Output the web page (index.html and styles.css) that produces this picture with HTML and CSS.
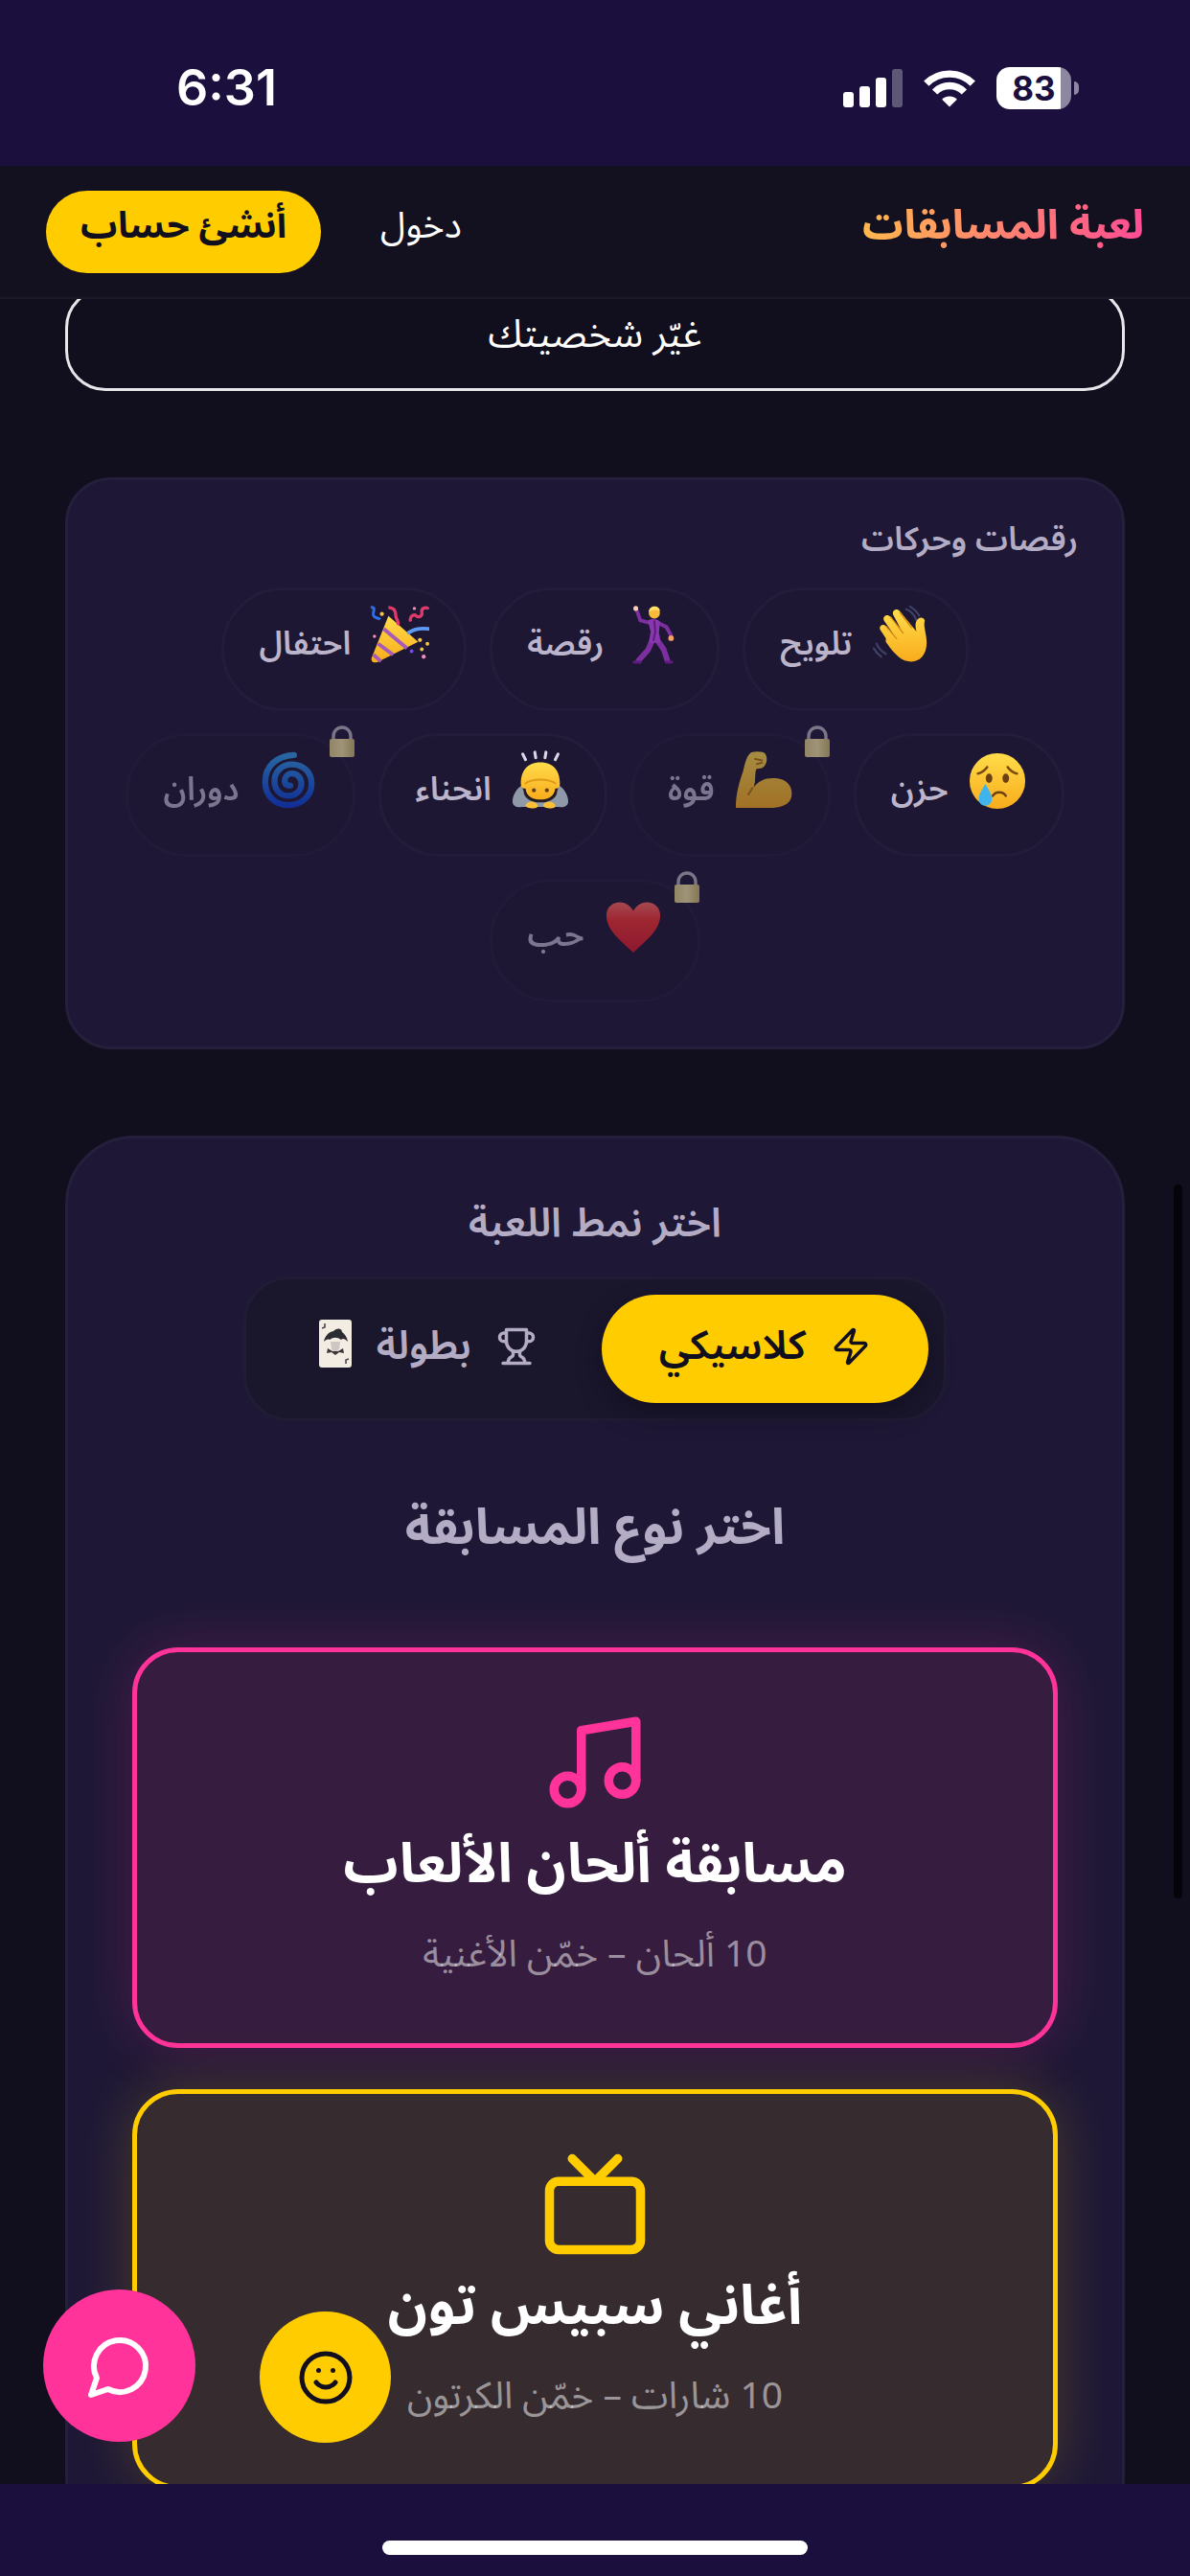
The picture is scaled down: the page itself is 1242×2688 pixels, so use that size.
FILE: index.html
```html
<!DOCTYPE html>
<html lang="ar" dir="rtl">
<head>
<meta charset="utf-8">
<meta name="viewport" content="width=device-width, initial-scale=1">
<title>لعبة المسابقات</title>
<link rel="stylesheet" href="styles.css">
</head>
<body>
<svg class="defs" width="0" height="0" aria-hidden="true">
  <defs>
    <linearGradient id="skin" x1="0" y1="0" x2="0" y2="1"><stop offset="0" stop-color="#ffdc4a"/><stop offset="1" stop-color="#f9ac1c"/></linearGradient>
    <linearGradient id="heart" x1="0" y1="0" x2="0" y2="1"><stop offset="0" stop-color="#ff6a62"/><stop offset=".35" stop-color="#f5312f"/><stop offset="1" stop-color="#d81a2c"/></linearGradient>
    <linearGradient id="swirl" x1="0" y1="0" x2="0" y2="1"><stop offset="0" stop-color="#2f9be8"/><stop offset="1" stop-color="#0a3fd6"/></linearGradient>
    <linearGradient id="brass" x1="0" y1="0" x2="1" y2="0"><stop offset="0" stop-color="#e0cf86"/><stop offset=".5" stop-color="#f4e6a4"/><stop offset="1" stop-color="#c9b76c"/></linearGradient>
    <symbol id="lock" viewBox="0 0 28 34">
      <path d="M5 16V11a9 9 0 0 1 18 0v5" fill="none" stroke="#b9b5bd" stroke-width="3.4"/>
      <rect x="1" y="14" width="26" height="19" rx="2" fill="url(#brass)"/>
    </symbol>
  </defs>
</svg>
<div class="app">
  <div class="status" dir="ltr">
    <span class="status-time">6:31</span>
    <div class="status-icons">
      <svg width="62" height="40" viewBox="0 0 62 40" fill="#fff" aria-hidden="true">
        <rect x="0" y="24" width="11" height="16" rx="3"/><rect x="17" y="18" width="11" height="22" rx="3"/><rect x="34" y="9" width="11" height="31" rx="3"/><rect x="51" y="0" width="11" height="40" rx="3" opacity=".3"/>
      </svg>
      <svg width="54" height="40" viewBox="0 0 54 40" fill="none" stroke="#fff" stroke-width="7.4" aria-hidden="true">
        <path d="M2.8 15.2a34 34 0 0 1 48.400 0"/><path d="M11.600 24a21.600 21.600 0 0 1 30.800 0"/><path d="M27 39.500l-7.800-7.800a11 11 0 0 1 15.600 0z" fill="#fff" stroke="none"/>
      </svg>
      <div class="battery"><span>83</span></div>
    </div>
  </div>

  <header class="topbar">
    <a class="brand" href="#">لعبة المسابقات</a>
    <nav class="auth">
      <a class="login" href="#">دخول</a>
      <button class="signup" type="button">أنشئ حساب</button>
    </nav>
  </header>

  <main class="content">
    <button class="change" type="button">غيّر شخصيتك</button>

    <section class="panel moves">
      <h2 class="panel-label">رقصات وحركات</h2>
      <div class="chips">
        <button class="chip" type="button">
          <svg class="emoji" viewBox="0 0 64 64" aria-hidden="true">
            <path d="M37 5c5 2 9 6 11 12M41 2c5 3 8 6 10 10M5 42c2 5 5 8 10 11M2 47c2 4 4 6 8 9" fill="none" stroke="#3f4266" stroke-width="2.200" stroke-linecap="round"/>
            <path d="M15 36 9 27c-2-4 3-7 6-4l9 10L13 17c-2-4 3-8 7-4l11 13-8-15c-2-5 4-8 7-4l18 22c-1-5-2-9 1-13 2-3 7-3 8 1-2 6 2 14 2 24 0 14-9 22-20 20C29 60 20 47 15 40z" fill="url(#skin)"/>
            <path d="M15 23l12 14M20 13l14 18M30 8l13 17" fill="none" stroke="#d98b13" stroke-width="1.400"/>
          </svg>
          <span>تلويح</span>
        </button>
        <button class="chip" type="button">
          <svg class="emoji" viewBox="0 0 64 64" aria-hidden="true">
            <g fill="none" stroke="#7d2fa0" stroke-linecap="round" stroke-linejoin="round">
              <path d="M31 20 19 17 15 6" stroke-width="4"/>
              <path d="M37 19 47 24 52 33" stroke-width="4"/>
              <path d="M32 38 27 49 17 60" stroke-width="6"/>
              <path d="M37 38 44 48 48 60" stroke-width="6"/>
            </g>
            <path d="M27 17c4-2 9-2 13 1l-1 12 2 11H28l2-12z" fill="#8a36ae"/>
            <path d="M34 17l1 12-2 10" fill="none" stroke="#5b1d7c" stroke-width="2"/>
            <circle cx="34" cy="9" r="6" fill="#fbb93c"/><path d="M28 8c0-8 12-8 12-1-4-2-8-2-12 1z" fill="#ffe06b"/>
            <circle cx="14" cy="4" r="2.600" fill="#fbd0b0"/><circle cx="52" cy="36" r="3" fill="#f7a066"/>
            <path d="M12 62h7M47 62h6" stroke="#5b1d7c" stroke-width="3" stroke-linecap="round"/>
          </svg>
          <span>رقصة</span>
        </button>
        <button class="chip" type="button">
          <svg class="emoji" viewBox="0 0 64 64" aria-hidden="true">
            <path d="M20 12 52 40 8 62c-5 1-7-1-6-5z" fill="url(#skin)"/>
            <path d="M15 26 40 47M9 42l16 12M4 54l8 7" stroke="#a75bb8" stroke-width="4"/>
            <path d="M1 3c7-1 1 6 3 9s6 2 7 4" fill="none" stroke="#2f6fe8" stroke-width="3"/>
            <path d="M20 3c7 0 8 5 8 9s4 6 2 10M44 18c-2-6 4-8 6-6s7 1 6-4 6-6 7-3" fill="none" stroke="#e03a6c" stroke-width="3.400"/>
            <path d="M42 30c6-4 12-5 21-4" fill="none" stroke="#5b9bf5" stroke-width="4" stroke-linecap="round"/>
            <g fill="#f5c842"><circle cx="13" cy="10" r="2.200"/><circle cx="54" cy="38" r="2.200"/><circle cx="62" cy="42" r="2"/><circle cx="56" cy="48" r="2"/></g>
            <g fill="#f28cb8"><circle cx="58" cy="56" r="2.200"/><circle cx="48" cy="4" r="1.800"/><circle cx="5" cy="34" r="1.800"/></g>
            <circle cx="45" cy="50" r="2" fill="#7a4be0"/>
          </svg>
          <span>احتفال</span>
        </button>
        <button class="chip" type="button">
          <svg class="emoji" viewBox="0 0 64 64" aria-hidden="true">
            <circle cx="32" cy="33" r="30" fill="url(#skin)"/>
            <path d="M11 25c4-1 7-3 10-7M43 18c3 4 6 6 10 7" fill="none" stroke="#7a4a12" stroke-width="2.600" stroke-linecap="round"/>
            <ellipse cx="23" cy="30" rx="3.600" ry="5" fill="#6b4012"/><ellipse cx="41" cy="30" rx="3.600" ry="5" fill="#6b4012"/>
            <path d="M27 49c3-5 11-5 14 0" fill="none" stroke="#6b4012" stroke-width="2.600" stroke-linecap="round"/>
            <path d="M19 36c4 7 7 11 7 16 0 10-14 10-14 0 0-5 3-9 7-16z" fill="#41b4ee"/>
          </svg>
          <span>حزن</span>
        </button>
        <button class="chip locked" type="button">
          <svg class="emoji" viewBox="0 0 64 64" aria-hidden="true">
            <path d="M2 62c0-16 4-28 8-40 2-9 4-17 9-20 5-1 13-1 15 2 3 5 1 13-4 15l-6 1c-2 7 0 13-3 20 6-8 14-11 24-10 13 1 19 10 17 20-2 9-12 12-25 12z" fill="url(#skin)"/>
            <path d="M20 40c-2 4-3 6-5 8M22 9l9 2M24 15l7-2" fill="none" stroke="#b8740f" stroke-width="2"/>
          </svg>
          <span>قوة</span>
          <svg class="badge"><use href="#lock"/></svg>
        </button>
        <button class="chip" type="button">
          <svg class="emoji" viewBox="0 0 64 64" aria-hidden="true">
            <path d="M13 4l3 6M26 2l1 6M38 2l-1 6M51 4l-3 6" stroke="#d9d6e8" stroke-width="3.200" stroke-linecap="round"/>
            <path d="M12 38c-6 3-10 11-10 17 0 5 5 7 10 6h40c5 1 10-1 10-6 0-6-4-14-10-17z" fill="#8f99a8"/>
            <path d="M14 44c0 16 36 16 36 0l2-6H12z" fill="#241c22"/>
            <path d="M11 36c0-13 6-23 21-23s21 10 21 23c0 4-2 5-5 5-1 9-8 12-16 12s-15-3-16-12c-3 0-5-1-5-5z" fill="url(#skin)"/>
            <path d="M15 36c9-6 25-6 34 0" fill="none" stroke="#e09a18" stroke-width="2.200"/>
            <circle cx="25" cy="43" r="2.200" fill="#6b4012"/><circle cx="39" cy="43" r="2.200" fill="#6b4012"/>
            <path d="M16 59c2-5 11-5 13 0s-13 4-13 0zM35 59c2-5 11-5 13 0s-13 4-13 0z" fill="#fcbf35"/>
          </svg>
          <span>انحناء</span>
        </button>
        <button class="chip locked" type="button">
          <svg class="emoji" viewBox="0 0 64 64" fill="none" stroke="url(#swirl)" stroke-width="6.500" stroke-linecap="round" aria-hidden="true">
            <path d="M38 5C19 6 7 17 7 34c0 15 11 25 25 25s25-10 25-23c0-12-9-21-21-21-11 0-19 8-19 18s7 16 15 16 14-6 14-13-5-11-10-11-8 4-8 8 3 5 6 5"/>
          </svg>
          <span>دوران</span>
          <svg class="badge"><use href="#lock"/></svg>
        </button>
        <button class="chip locked" type="button">
          <svg class="emoji" viewBox="0 0 64 64" aria-hidden="true">
            <path d="M32 61C22 51 3 38 3 21 3 5 24 1 32 16 40 1 61 5 61 21c0 17-19 30-29 40z" fill="url(#heart)"/>
          </svg>
          <span>حب</span>
          <svg class="badge"><use href="#lock"/></svg>
        </button>
      </div>
    </section>

    <section class="panel game">
      <h2 class="mode-label">اختر نمط اللعبة</h2>
      <div class="modes">
        <button class="mode active" type="button">
          <svg class="icon" viewBox="0 0 24 24" aria-hidden="true"><path d="M4 14a1 1 0 0 1-.78-1.630l9.900-10.200a.5.5 0 0 1 .86.460l-1.920 6.020A1 1 0 0 0 13 10h7a1 1 0 0 1 .78 1.630l-9.900 10.200a.5.5 0 0 1-.86-.46l1.920-6.020A1 1 0 0 0 11 14z"/></svg>
          <span>كلاسيكي</span>
        </button>
        <button class="mode" type="button">
          <svg class="icon" viewBox="0 0 24 24" aria-hidden="true"><path d="M6 9H4.500a2.500 2.500 0 0 1 0-5H6M18 9h1.500a2.500 2.500 0 0 0 0-5H18M4 22h16M10 14.660V17c0 .55-.47.98-.97 1.210C7.850 18.750 7 20.240 7 22M14 14.660V17c0 .55.47.98.97 1.210C16.150 18.750 17 20.240 17 22M18 2H6v7a6 6 0 0 0 12 0V2Z"/></svg>
          <span>بطولة</span>
          <svg class="joker" viewBox="0 0 34 50" aria-hidden="true">
            <rect x="0" y="0" width="34" height="50" rx="3" fill="#f3ece2"/>
            <path d="M5 23c1-6 5-10 10-11 4-4 9-3 9 1 3 2 5 5 6 10-3-3-5-4-7-2-4-3-8-3-12 0-2-1-4 0-6 2z" fill="#2e2c33"/>
            <path d="M12 23h10l-1 8-4 3-4-3z" fill="#cfc6c4"/>
            <path d="M9 30l5 3h6l5-3 1 5-5-1-4 3-4-3-5 1z" fill="#3b3436"/>
            <path d="M6 4v4l-3 1M28 46v-4l3-1" fill="none" stroke="#4a464e" stroke-width="1.600"/>
          </svg>
        </button>
      </div>

      <h1 class="pick">اختر نوع المسابقة</h1>

      <div class="quizzes">
        <button class="quiz pink" type="button">
          <svg class="quiz-icon" viewBox="0 0 24 24" aria-hidden="true"><path d="M9 18V5l12-2v13"/><circle cx="6" cy="18" r="3"/><circle cx="18" cy="16" r="3"/></svg>
          <span class="quiz-title">مسابقة ألحان الألعاب</span>
          <span class="quiz-sub">10 ألحان – خمّن الأغنية</span>
        </button>
        <button class="quiz yellow" type="button">
          <svg class="quiz-icon" viewBox="0 0 24 24" aria-hidden="true"><rect x="2" y="7" width="20" height="15" rx="2"/><path d="m17 2-5 5-5-5"/></svg>
          <span class="quiz-title">أغاني سبيس تون</span>
          <span class="quiz-sub">10 شارات – خمّن الكرتون</span>
        </button>
      </div>
    </section>

    <div class="thumb"></div>
    <button class="fab emote" type="button" aria-label="تعبيرات">
      <svg viewBox="0 0 24 24" aria-hidden="true"><circle cx="12" cy="12" r="10"/><path d="M8 14s1.500 2 4 2 4-2 4-2M9 9h.01M15 9h.01"/></svg>
    </button>
    <button class="fab chat" type="button" aria-label="محادثة">
      <svg viewBox="0 0 24 24" aria-hidden="true"><path d="M7.900 20A9 9 0 1 0 4 16.100L2 22Z"/></svg>
    </button>
  </main>

  <div class="home"><div class="home-bar"></div></div>
</div>
</body>
</html>
```
FILE: styles.css
```css
* { box-sizing: border-box; }

body {
  margin: 0;
  background: #110e1e;
  color: #fff;
  font-family: "Noto Sans Arabic", "Noto Sans", "DejaVu Sans", sans-serif;
}

button {
  font: inherit;
  color: inherit;
  background: none;
  border: 0;
  padding: 0;
  cursor: pointer;
}

a { color: inherit; text-decoration: none; }
h1, h2 { margin: 0; }

.defs { position: absolute; }

.app {
  display: flex;
  flex-direction: column;
  height: 100vh;
}

/* System bars */
.status {
  display: flex;
  justify-content: space-between;
  align-items: center;
  height: 173px;
  padding: 10px 124px 0 184px;
  background: #1b0f3d;
}

.status-time {
  font: 600 52px/1 Inter, sans-serif;
}

.status-icons {
  display: flex;
  align-items: center;
  gap: 22px;
}

.battery {
  position: relative;
  width: 78px;
  height: 44px;
  border-radius: 14px;
  background: linear-gradient(to right, #fff 86%, #8d87a0 86%);
  color: #1b0f3d;
  font: 700 35px/44px Inter, sans-serif;
  text-align: center;
}

.battery::after {
  content: "";
  position: absolute;
  left: 81px;
  top: 15px;
  width: 5px;
  height: 14px;
  border-radius: 0 5px 5px 0;
  background: #8d87a0;
}

.home {
  display: flex;
  justify-content: center;
  align-items: center;
  height: 96px;
  padding-top: 36px;
  background: #1b0f3d;
}

.home-bar {
  width: 444px;
  height: 15px;
  border-radius: 8px;
  background: #fff;
}

/* Header */
.topbar {
  display: flex;
  justify-content: space-between;
  align-items: center;
  height: 139px;
  padding: 0 48px;
  background: #13111f;
  border-bottom: 2px solid #1c1928;
}

.brand {
  padding-bottom: 12px;
  font-size: 42px;
  font-weight: 800;
  background: linear-gradient(to left, #ff4d94, #ffb84d);
  background-clip: text;
  color: transparent;
}

.auth {
  display: flex;
  align-items: center;
  gap: 62px;
}

.login {
  padding-bottom: 12px;
  font-size: 38px;
}

.signup {
  height: 86px;
  padding: 0 36px 12px;
  border-radius: 43px;
  background: #ffcc00;
  color: #110e1e;
  font-size: 38px;
  font-weight: 700;
  line-height: 60px;
}

/* Page */
.content {
  position: relative;
  display: flex;
  flex: 1;
  flex-direction: column;
  gap: 90px;
  min-height: 0;
  padding: 0 68px;
  overflow: hidden;
}

.change {
  flex: none;
  height: 108px;
  margin-top: -12px;
  padding-bottom: 8px;
  border: 3px solid #e7e6ea;
  border-radius: 42px;
  font-size: 40px;
  line-height: 56px;
}

.panel {
  flex: none;
  background: #1e1836;
  border: 3px solid #251f3c;
}

.moves {
  padding: 32px 46px 46px;
  border-radius: 48px;
}

.panel-label {
  color: #b3acc4;
  font-size: 34px;
  font-weight: 600;
  line-height: 60px;
}

.chips {
  display: flex;
  flex-wrap: wrap;
  justify-content: center;
  gap: 23px 24px;
  margin-top: 20px;
  padding: 0 12px;
}

.chip {
  position: relative;
  display: flex;
  align-items: center;
  gap: 20px;
  height: 129px;
  padding: 0 36px 12px;
  border: 3px solid #231d3c;
  border-radius: 65px;
  background: #1d1733;
  color: #bbb4ca;
  font-size: 34px;
  font-weight: 600;
}

.locked { opacity: .6; }

.emoji {
  width: 62px;
  height: 62px;
  margin-bottom: 20px;
}

.badge {
  position: absolute;
  top: -11px;
  right: -3px;
  width: 28px;
  height: 34px;
}

.game {
  display: flex;
  flex-direction: column;
  align-items: center;
  padding: 56px 67px;
  border-radius: 72px;
}

.mode-label {
  color: #b3acc4;
  font-size: 42px;
  font-weight: 600;
  line-height: 66px;
}

.modes {
  display: flex;
  gap: 8px;
  margin-top: 22px;
  padding: 16px;
  border: 3px solid #211c35;
  border-radius: 48px;
  background: #1a162c;
}

.mode {
  display: flex;
  align-items: center;
  gap: 26px;
  height: 113px;
  padding: 0 60px 6px;
  border-radius: 57px;
  color: #b3acc4;
  font-size: 42px;
  font-weight: 600;
}

.mode.active {
  background: #ffcc00;
  color: #110e1e;
  box-shadow: 0 12px 24px #0e0c1c80;
}

.icon {
  width: 42px;
  height: 42px;
  fill: none;
  stroke: currentColor;
  stroke-width: 2;
  stroke-linecap: round;
  stroke-linejoin: round;
}

.joker {
  width: 34px;
  height: 50px;
  margin-bottom: 6px;
}

.pick {
  margin-top: 72px;
  color: #b3acc4;
  font-size: 52px;
  font-weight: 700;
  line-height: 80px;
}

.quizzes {
  display: flex;
  flex-direction: column;
  align-self: stretch;
  gap: 43px;
  margin-top: 84px;
}

.quiz {
  display: flex;
  flex-direction: column;
  align-items: center;
  height: 418px;
  padding-top: 58px;
  border: 5px solid;
  border-radius: 48px;
}

.quiz.pink {
  border-color: #ff3399;
  background: #361c3e;
  box-shadow: 0 0 60px #ff339933;
}

.quiz.yellow {
  border-color: #ffcc00;
  background: #362b2f;
  box-shadow: 0 0 60px #ffcc0033;
}

.quiz-icon {
  width: 114px;
  height: 114px;
  fill: none;
  stroke: #ff3399;
  stroke-width: 2;
  stroke-linecap: round;
  stroke-linejoin: round;
}

.yellow .quiz-icon { stroke: #ffcc00; }

.quiz-title {
  margin-top: 6px;
  font-size: 57px;
  font-weight: 700;
  line-height: 88px;
}

.quiz-sub {
  margin-top: 18px;
  color: #ffffff80;
  font-size: 39px;
  line-height: 64px;
}

/* Floating layer */
.thumb {
  position: absolute;
  top: 924px;
  right: 8px;
  width: 9px;
  height: 745px;
  border-radius: 5px;
  background: #05040a;
}

.fab {
  position: absolute;
  display: grid;
  place-items: center;
  border-radius: 50%;
}

.fab svg {
  fill: none;
  stroke: currentColor;
  stroke-width: 2;
  stroke-linecap: round;
  stroke-linejoin: round;
}

.chat {
  left: 45px;
  bottom: 44px;
  width: 159px;
  height: 159px;
  background: #ff3399;
}

.chat svg { width: 72px; height: 72px; }

.emote {
  left: 271px;
  bottom: 43px;
  width: 137px;
  height: 137px;
  background: #ffcc00;
  color: #110e1e;
}

.emote svg { width: 60px; height: 60px; }
```
